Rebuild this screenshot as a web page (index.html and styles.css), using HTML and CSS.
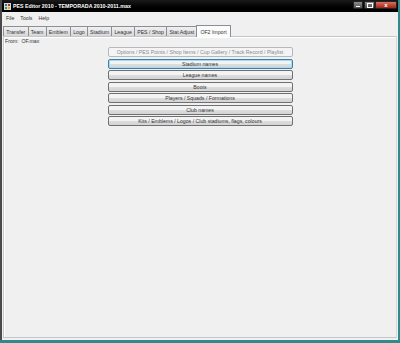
FILE: index.html
```html
<!DOCTYPE html>
<html>
<head>
<title>PES Editor 2010</title>
<link rel="stylesheet" href="styles.css">
</head>
<body>
<div class="Window">
  <div class="TitleBar">
    <svg class="AppIcon" width="7" height="7" viewBox="0 0 7 7">
      <rect x="0" y="0" width="7" height="7" fill="#d8d8d8"/>
      <rect x="1" y="1" width="2" height="2" fill="#3a6ea5"/>
      <rect x="4" y="1" width="2" height="2" fill="#c03030"/>
      <rect x="1" y="4" width="2" height="2" fill="#3a9a3a"/>
      <rect x="4" y="4" width="2" height="2" fill="#e0b020"/>
    </svg>
    <span class="Caption">PES Editor 2010 - TEMPORADA 2010-2011.max</span>
    <div class="Controls">
      <span class="Ctl Min"><i></i></span>
      <span class="Ctl Max"><i></i></span>
      <span class="Ctl Close">x</span>
    </div>
  </div>
  <div class="MenuBar">
    <span>File</span>
    <span>Tools</span>
    <span>Help</span>
  </div>
  <div class="Tabs">
    <a>Transfer</a>
    <a>Team</a>
    <a>Emblem</a>
    <a>Logo</a>
    <a>Stadium</a>
    <a>League</a>
    <a>PES / Shop</a>
    <a>Stat Adjust</a>
    <a class="Active">OF2 Import</a>
  </div>
  <div class="Page">
    <div class="From">From:&nbsp; OF.max</div>
    <div class="Buttons">
      <button class="Disabled">Options / PES Points / Shop Items / Cup Gallery / Track Record / Playlist</button>
      <button class="Focus">Stadium names</button>
      <button>League names</button>
      <button>Boots</button>
      <button>Players / Squads / Formations</button>
      <button>Club names</button>
      <button>Kits / Emblems / Logos / Club stadiums, flags, colours</button>
    </div>
  </div>
</div>
</body>
</html>
```

FILE: styles.css
```css
html, body
{
    margin: 0;
    padding: 0;
    width: 400px;
    height: 343px;
    overflow: hidden;
    background: #2f8a8c;
}

div.Window
{
    box-sizing: border-box;
    width: 398px;
    height: 340px;
    border-left: 2px solid #4a4a4a;
    background: #f0f0f0;
    display: flex;
    flex-direction: column;
    font-family: "Liberation Sans", Arial, sans-serif;
    font-size: 5.2px;
    color: #333;
}

div.TitleBar
{
    height: 12px;
    flex: none;
    background: linear-gradient(#1a1a1a, #000 60%);
    display: flex;
    align-items: center;
    padding-left: 2px;
    color: #fff;
}

svg.AppIcon { margin-right: 2px; }

span.Caption
{
    font-size: 5.3px;
    font-weight: bold;
    flex: 1;
}

div.Controls
{
    display: flex;
    align-self: flex-start;
    margin-top: 1px;
    margin-right: 1px;
}

span.Ctl
{
    box-sizing: border-box;
    height: 8px;
    border: 1px solid #222;
    border-radius: 1px;
    background: linear-gradient(#8c8c8c, #4e4e4e);
    display: flex;
    align-items: center;
    justify-content: center;
}

span.Min { width: 10px; margin-right: 1px; }
span.Max { width: 11px; }

span.Min i
{
    width: 4px;
    height: 1px;
    background: #fff;
    margin-top: 2px;
}

span.Max i
{
    width: 4px;
    height: 3px;
    border: 1px solid #fff;
    border-top-width: 1.5px;
}

span.Close
{
    width: 22px;
    background: linear-gradient(#d87060, #a02414);
    color: #fff;
    font-weight: bold;
    font-size: 6px;
    line-height: 6px;
}

div.MenuBar
{
    height: 12px;
    flex: none;
    display: flex;
    align-items: center;
    padding-left: 3px;
    background: #f0f0f0;
}

div.MenuBar span { padding: 0 5px 0 1px; }

div.Tabs
{
    height: 12px;
    flex: none;
    display: flex;
    align-items: flex-end;
    padding-left: 1px;
}

div.Tabs a
{
    box-sizing: border-box;
    height: 10px;
    padding: 0 2.2px;
    display: flex;
    align-items: center;
    border: 1px solid #8a8e96;
    border-bottom: 0;
    border-left-width: 0;
    background: linear-gradient(#f0f0f0, #d8d8d8);
    white-space: nowrap;
}

div.Tabs a:first-child { border-left-width: 1px; }

div.Tabs a.Active
{
    height: 12px;
    background: #fbfbfb;
    border-left-width: 1px;
    margin-left: -1px;
    padding: 0 3px;
    position: relative;
    top: 1px;
}

div.Page
{
    flex: 1;
    margin: 0 1px 2px 1px;
    border: 1px solid #c4c6ca;
    border-right-color: #d8d8d8;
    background: #f0f0f0;
    box-shadow: inset 1px 1px 0 #fff;
}

div.From
{
    padding: 1px 0 0 1px;
    height: 6px;
    line-height: 6px;
}

div.Buttons
{
    width: 185px;
    margin: 3px auto 0 auto;
    display: flex;
    flex-direction: column;
    gap: 1.5px;
}

div.Buttons button
{
    box-sizing: border-box;
    height: 10px;
    padding: 0;
    margin: 0;
    border: 1px solid #707070;
    border-radius: 2px;
    background: linear-gradient(#f3f3f3 45%, #dddddd 50%, #d4d4d4);
    font-family: "Liberation Sans", Arial, sans-serif;
    font-size: 5.2px;
    color: #333;
}

div.Buttons button.Disabled
{
    border-color: #b6b9bc;
    background: #f4f4f4;
    color: #8a8a8a;
}

div.Buttons button.Focus
{
    border-color: #3c7fb1;
    box-shadow: inset 0 0 0 1px #a8d8f0;
}
```
